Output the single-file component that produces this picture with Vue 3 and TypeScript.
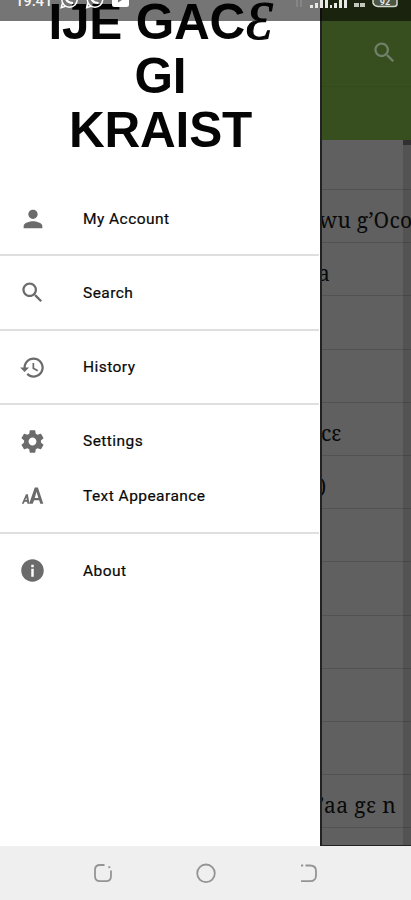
<script setup lang="ts">
interface Item { label: string; icon: string; size: number }

const SEARCH = 'M15.5 14h-.79l-.28-.27C15.41 12.59 16 11.11 16 9.5 16 5.91 13.09 3 9.5 3S3 5.91 3 9.5 5.91 16 9.5 16c1.61 0 3.09-.59 4.23-1.57l.27.28v.79l5 4.99L20.49 19l-4.99-5zm-6 0C7.01 14 5 11.99 5 9.5S7.01 5 9.5 5 14 7.01 14 9.5 11.99 14 9.5 14z'

const groups: Item[][] = [
  [{ label: 'My Account', icon: 'M12 12c2.21 0 4-1.79 4-4s-1.79-4-4-4-4 1.79-4 4 1.79 4 4 4zm0 2c-2.67 0-8 1.34-8 4v2h16v-2c0-2.66-5.33-4-8-4z', size: 28 }],
  [{ label: 'Search', icon: SEARCH, size: 27 }],
  [{ label: 'History', icon: 'M13 3c-4.97 0-9 4.03-9 9H1l3.89 3.89.07.14L9 12H6c0-3.87 3.13-7 7-7s7 3.13 7 7-3.13 7-7 7c-1.93 0-3.68-.79-4.94-2.06l-1.42 1.42C8.27 19.99 10.51 21 13 21c4.97 0 9-4.03 9-9s-4.03-9-9-9zm-1 5v5l4.28 2.54.72-1.21-3.5-2.08V8H12z', size: 27 }],
  [
    { label: 'Settings', icon: 'M19.43 12.98c.04-.32.07-.64.07-.98s-.03-.66-.07-.98l2.11-1.65c.19-.15.24-.42.12-.64l-2-3.46c-.12-.22-.39-.3-.61-.22l-2.49 1c-.52-.4-1.08-.73-1.69-.98l-.38-2.65C14.46 2.18 14.25 2 14 2h-4c-.25 0-.46.18-.49.42l-.38 2.65c-.61.25-1.17.59-1.69.98l-2.49-1c-.23-.09-.49 0-.61.22l-2 3.46c-.13.22-.07.49.12.64l2.11 1.65c-.04.32-.07.65-.07.98s.03.66.07.98l-2.11 1.65c-.19.15-.24.42-.12.64l2 3.46c.12.22.39.3.61.22l2.49-1c.52.4 1.08.73 1.69.98l.38 2.65c.03.24.24.42.49.42h4c.25 0 .46-.18.49-.42l.38-2.65c.61-.25 1.17-.59 1.69-.98l2.49 1c.23.09.49 0 .61-.22l2-3.46c.12-.22.07-.49-.12-.64l-2.11-1.65zM12 15.5c-1.93 0-3.5-1.57-3.5-3.5s1.57-3.5 3.5-3.5 3.5 1.57 3.5 3.5-1.57 3.5-3.5 3.5z', size: 27 },
    { label: 'Text Appearance', icon: 'M2.500 18.500 6.200 10h1.700l1.400 8.500H7.500l-.3-1.900H5l-.8 1.900zM5.600 15.200h1.300L6.600 12.900zM9 18.500 14 4h2.800l4.800 14.500h-2.700l-1-3.100h-4.500l-1.200 3.100zM14 13.300h3.200l-1.600-5.500z', size: 27 },
  ],
  [{ label: 'About', icon: 'M12 2C6.48 2 2 6.48 2 12s4.48 10 10 10 10-4.48 10-10S17.52 2 12 2zm1.100 15.500h-2.200v-7h2.200v7zm0-8.500h-2.200V6.800h2.200V9z', size: 27 }],
]

const rows: string[] = ['', 'wu g’Oco', 'a', '', '', 'cɛ', ')', '', '', '', '', '', '’aa gɛ n', '']
</script>

<template>
  <div class="screen">
    <div class="body">
      <aside class="drawer">
        <h1 class="title">
          <span class="line">IJE GAC<span class="eps">Ɛ</span></span>
          <span class="line">GI</span>
          <span class="line">KRAIST</span>
        </h1>
        <nav class="menu">
          <div v-for="(group, g) in groups" :key="g" class="group">
            <div v-for="item in group" :key="item.label" class="item">
              <span class="glyph">
                <svg :width="item.size" :height="item.size" viewBox="0 0 24 24"><path fill-rule="evenodd" :d="item.icon" /></svg>
              </span>
              <span class="label">{{ item.label }}</span>
            </div>
          </div>
        </nav>
      </aside>
      <main class="page">
        <header class="appbar">
          <div class="toolbar">
            <svg width="27" height="27" viewBox="0 0 24 24"><path :d="SEARCH" /></svg>
          </div>
        </header>
        <div class="list">
          <div v-for="(row, i) in rows" :key="i" class="row" :class="{ first: i === 0 }"><span class="verse" :class="'verse-' + i">{{ row }}</span></div>
        </div>
      </main>
    </div>
    <div class="status">
      <span class="time">19.41</span>
      <svg class="notes" width="72" height="10" viewBox="0 0 72 10">
        <g fill="none" stroke="#fff" stroke-width="1.5">
          <circle cx="9.500" cy="-.5" r="7.700" />
          <circle cx="35" cy="-.5" r="7.700" />
          <path d="M2.500 3 1.200 7.600 5.500 6.200M28 3 26.700 7.600 31 6.200" />
          <path stroke-width="2.200" d="M6-1Q7.500 3 13 3M31.500-1Q33 3 38.500 3" />
        </g>
        <path fill="#fff" fill-rule="evenodd" d="M52 0H69V4.500Q69 7 66.500 7H54.500Q52 7 52 4.500ZM58 0V2.500L62 0Z" />
      </svg>
      <svg class="signals" width="105" height="10" viewBox="0 0 105 10">
        <path d="M3 0V7M7 0V7" stroke="#8c8c8c" stroke-width="1.500" />
        <path fill="#e8e8e4" d="M16 5h3v3h-3zM21 3h3v5h-3zM26 0h3v8h-3zM31 0h3v8h-3zM36 5h2v3h-2zM40 3h3v5h-3zM45 0h3v8h-3zM50 0h3v8h-3z" />
        <path fill="#c3c8bd" d="M60 3h5v4h-5zM66 3h5v4h-5z" />
        <path fill="#4c5645" stroke="#d2d6cc" stroke-width="1.500" d="M82-2H103V4Q103 6.500 100 6.500H84Q80 6 79 3V0Z" />
        <text x="91" y="4.500" class="battery">92</text>
      </svg>
    </div>
    <footer class="navbar">
      <svg width="22" height="22" viewBox="0 0 22 22"><path d="M12.500 3H8Q3 3 3 8V14Q3 19.200 8 19.200H14Q19 19.200 19 14V8.500" /><path d="M16.300 5.200H18.300" /></svg>
      <svg width="22" height="22" viewBox="0 0 22 22"><circle cx="11" cy="11.300" r="8.800" /></svg>
      <svg width="22" height="22" viewBox="0 0 22 22"><path d="M3 3.500H5.200M7.500 3.500H12Q18 3.500 18 9V13.500Q18 19.200 12 19.200H3" /></svg>
    </footer>
  </div>
</template>

<style>
body { margin: 0; overflow: hidden; }
</style>

<style scoped>
.screen { position: relative; width: 411px; height: 900px; display: flex; flex-direction: column; overflow: hidden; background: #fff; }
.body { display: flex; height: 846px; }
.drawer { width: 320px; height: 846px; flex: none; overflow: hidden; background: #fff; border-right: 2px solid #222; }
.title { margin: -5px 0 0; height: 187px; display: flex; flex-direction: column; color: #050505; font: bold 49.500px/54px "Liberation Sans", Arial, sans-serif; text-align: center; letter-spacing: -.2px; padding-left: 1px; }
.line { display: block; height: 54px; white-space: nowrap; }
.eps { margin-left: 1px; font: italic 54px/40px "Liberation Serif", serif; -webkit-text-stroke: 1.200px #050505; }
.menu { display: flex; flex-direction: column; }
.group { padding: 9px 0 8.300px; border-bottom: 2px solid #dfdfdf; margin-right: 1px; }
.group:last-child { border-bottom: 0; }
.item { display: flex; align-items: center; height: 55px; }
.glyph { width: 65px; display: flex; justify-content: center; flex: none; }
.glyph svg { fill: #6b6b6b; }
.label { margin-left: 18px; color: #080808; font: 400 15.500px/20px Roboto, sans-serif; letter-spacing: .45px; -webkit-text-stroke: .2px #080808; }
.page { flex: 1; min-width: 0; background: #606060; overflow: hidden; box-sizing: border-box; border-bottom: 1px solid #222; }
.appbar { height: 140px; background: #374e1e; }
.toolbar { height: 87px; box-sizing: border-box; border-bottom: 1px solid #34491d; padding: 39px 13px 0 0; display: flex; justify-content: flex-end; }
.toolbar svg { fill: #71806a; }
.list { height: 706px; display: flex; flex-direction: column; box-sizing: border-box; background: linear-gradient(#303030 0 5px, #535353 5px) right top / 8px 100% no-repeat; }
.row { height: 53.200px; box-sizing: border-box; border-bottom: 1px solid rgba(30, 30, 30, .22); color: #090909; font: 21px/61px "Noto Serif", "Liberation Serif", serif; white-space: nowrap; flex: none; }
.row.first { height: 50px; }
.verse { display: block; }
.verse-1 { margin-left: -3px; letter-spacing: .3px; }
.verse-2 { margin-left: -4px; }
.verse-5 { margin-left: -1px; }
.verse-6 { margin-left: -3px; }
.verse-12 { margin-left: -3px; letter-spacing: .4px; }
.status { position: absolute; top: 0; left: 0; width: 411px; height: 21px; background: rgba(0, 0, 0, .54); overflow: hidden; }
.time { position: absolute; left: 15px; top: -9px; color: #f5f5f5; font: 500 15px/20px Roboto, sans-serif; letter-spacing: -.2px; }
.notes { position: absolute; left: 60px; top: 0; }
.signals { position: absolute; left: 294px; top: 0; }
.battery { fill: #e8e8e8; font: bold 9px Roboto, sans-serif; text-anchor: middle; }
.navbar { height: 54px; background: #efefef; display: flex; justify-content: center; align-items: center; gap: 81px; }
.navbar svg { fill: none; stroke: #949494; stroke-width: 1.800; }
</style>
